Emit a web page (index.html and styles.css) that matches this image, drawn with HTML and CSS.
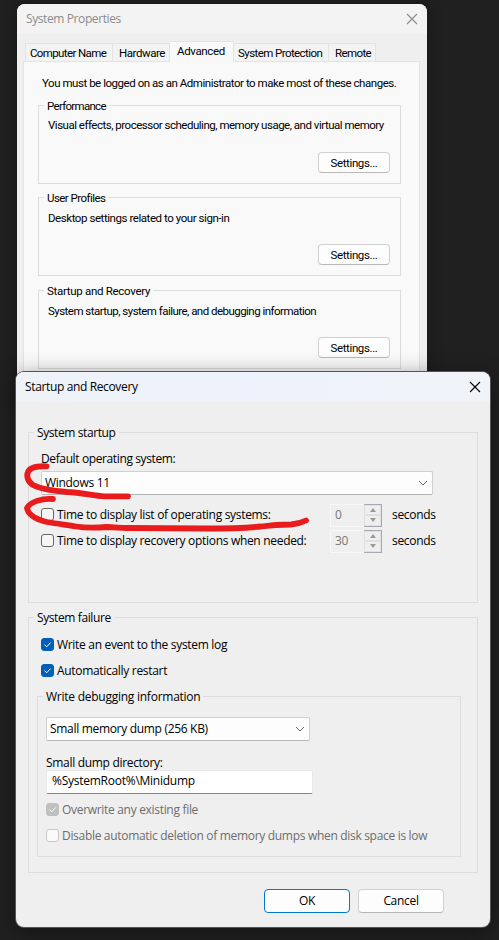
FILE: index.html
```html
<!DOCTYPE html>
<html lang="en">
<head>
<meta charset="utf-8">
<title>System Properties</title>
<link rel="stylesheet" href="styles.css">
</head>
<body>
<main class="desktop">
  <section class="window properties">
    <header class="titlebar"><span>System Properties</span>
      <svg class="close" viewBox="0 0 12 12"><path d="M1 1l10 10M11 1L1 11"/></svg>
    </header>
    <nav class="tabs">
      <div class="tab tab-name"><span>Computer Name</span></div>
      <div class="tab tab-hardware"><span>Hardware</span></div>
      <div class="tab tab-advanced active"><span>Advanced</span></div>
      <div class="tab tab-protection"><span>System Protection</span></div>
      <div class="tab tab-remote"><span>Remote</span></div>
    </nav>
    <div class="page">
      <p class="intro"><span>You must be logged on as an Administrator to make most of these changes.</span></p>
      <div class="group performance">
        <h2 class="legend"><span>Performance</span></h2>
        <p class="desc"><span>Visual effects, processor scheduling, memory usage, and virtual memory</span></p>
        <button class="button settings"><span>Settings...</span></button>
      </div>
      <div class="group profiles">
        <h2 class="legend"><span>User Profiles</span></h2>
        <p class="desc low"><span>Desktop settings related to your sign-in</span></p>
        <button class="button settings"><span>Settings...</span></button>
      </div>
      <div class="group boot">
        <h2 class="legend"><span>Startup and Recovery</span></h2>
        <p class="desc low"><span>System startup, system failure, and debugging information</span></p>
        <button class="button settings"><span>Settings...</span></button>
      </div>
    </div>
  </section>

  <section class="window recovery">
    <header class="titlebar"><span>Startup and Recovery</span>
      <svg class="close" viewBox="0 0 12 12"><path d="M1 1l10 10M11 1L1 11"/></svg>
    </header>
    <div class="content">
      <div class="group startup">
        <h2 class="legend"><span>System startup</span></h2>
        <p class="label"><span>Default operating system:</span></p>
        <div class="combo os"><span>Windows 11</span><svg class="chevron" viewBox="0 0 10 6"><path d="M1 1l4 4 4-4"/></svg></div>
        <div class="row timed">
          <i class="check"></i><span class="caption">Time to display list of operating systems:</span>
          <div class="spinner"><span class="value">0</span><div class="arrows"><i class="up"></i><i class="down"></i></div></div>
          <span>seconds</span>
        </div>
        <div class="row timed">
          <i class="check"></i><span class="caption">Time to display recovery options when needed:</span>
          <div class="spinner"><span class="value">30</span><div class="arrows"><i class="up"></i><i class="down"></i></div></div>
          <span>seconds</span>
        </div>
      </div>
      <div class="group failure">
        <h2 class="legend"><span>System failure</span></h2>
        <div class="row"><i class="check on"><svg viewBox="0 0 13 13"><path d="M3.5 6.6l2.2 2.2 4-4.3"/></svg></i><span>Write an event to the system log</span></div>
        <div class="row"><i class="check on"><svg viewBox="0 0 13 13"><path d="M3.5 6.6l2.2 2.2 4-4.3"/></svg></i><span>Automatically restart</span></div>
        <div class="group debugging">
          <h2 class="legend"><span>Write debugging information</span></h2>
          <div class="combo dump"><span>Small memory dump (256 KB)</span><svg class="chevron" viewBox="0 0 10 6"><path d="M1 1l4 4 4-4"/></svg></div>
          <p class="label"><span>Small dump directory:</span></p>
          <div class="input"><span>%SystemRoot%\Minidump</span></div>
          <div class="row disabled"><i class="check on"><svg viewBox="0 0 13 13"><path d="M3.5 6.6l2.2 2.2 4-4.3"/></svg></i><span>Overwrite any existing file</span></div>
          <div class="row disabled"><i class="check"></i><span>Disable automatic deletion of memory dumps when disk space is low</span></div>
        </div>
      </div>
      <footer class="actions">
        <button class="button default"><span>OK</span></button>
        <button class="button"><span>Cancel</span></button>
      </footer>
    </div>
    <svg class="ink" viewBox="0 0 300 76">
      <path d="M21.5 10.3C14 10 5 11 3 16C1 20 3 26 8 29C18 34 30 35 42 36C58 36.5 68 40 80 40.3L103 40.3"/>
      <path d="M28 43C17 42 5 46 2 52C3 58 10 63 22 66C34 68 42 69 51 70.5C60 72 70 72 82 71C90 71 95 72 102 72L180 72.5C205 72.5 222 72 236 70.5C247 69 253 68.5 266 68.5C272 68 277 66.5 281 64.5"/>
    </svg>
  </section>
</main>
</body>
</html>
```
FILE: styles.css
```css
* { box-sizing: border-box; }
body { margin: 0; font: 12px/16px "Open Sans", sans-serif; color: #000; letter-spacing: -.31px; }
p, h2 { margin: 0; font: inherit; }
span { white-space: nowrap; }
svg { fill: none; display: block; }
.desktop { position: relative; width: 499px; height: 940px; overflow: hidden; background: #202020; }
.window { position: absolute; border-radius: 8px; }
.titlebar { display: flex; justify-content: space-between; height: 30px; align-items: center; }
.close { width: 12px; height: 12px; stroke: currentColor; stroke-width: 1.1; }
.group { border: 1px solid #dcdcdc; }
.legend { width: max-content; height: 16px; margin-top: -8px; padding: 0 3px; }
.button { display: flex; align-items: center; justify-content: center; padding: 0; font: inherit; letter-spacing: inherit; color: #000; background: #fdfdfd; border: 1px solid #d0d0d0; border-bottom-color: #b8b8b8; border-radius: 4px; }

.properties { left: 17px; top: 4px; width: 410px; height: 400px; background: #efefef; overflow: hidden; font-family: Roboto, sans-serif; font-size: 11.5px; letter-spacing: -.46px; box-shadow: 0 0 14px rgba(0,0,0,.35); }
.properties .titlebar { background: #f3f3f3; color: #8c8c8c; padding: 0 9px; font-family: "Open Sans", sans-serif; font-size: 12px; letter-spacing: -.4px; }
.tabs { display: flex; align-items: flex-end; height: 28px; padding-left: 8px; margin-bottom: -1px; position: relative; }
.tab { height: 19px; border: 1px solid #e3e3e3; border-left-width: 0; background: #f3f3f3; line-height: 18px; padding-left: 5px; letter-spacing: -.45px; }
.tab-name { width: 88px; border-left-width: 1px; padding-left: 4px; letter-spacing: -.62px; }
.tab-hardware { width: 57px; padding-left: 6px; }
.tab-advanced { width: 64px; }
.tab-protection { width: 95px; padding-left: 4px; letter-spacing: -.57px; }
.tab-remote { width: 47px; padding-left: 6px; letter-spacing: -.6px; }
.tab.active { height: 21px; background: #f9f9f9; border-bottom: 0; padding-left: 7px; letter-spacing: -.35px; }
.page { margin-left: 6px; width: 397px; height: 400px; border: 1px solid #e3e3e3; background: #f9f9f9; padding: 13px 0 0 14px; }
.intro { padding-left: 4px; margin-bottom: 14px; }
.page .group { width: 363px; height: 79px; margin-bottom: 14px; padding: 0 10px 0 5px; display: flex; flex-direction: column; }
.page .group.performance { margin-bottom: 13px; }
.page .legend { background: #f9f9f9; letter-spacing: -.3px; }
.performance .legend { letter-spacing: -.7px; }
.page .performance .legend { letter-spacing: -.7px; }
.page .profiles .legend { letter-spacing: -.55px; }
.desc { padding: 3px 0 0 4px; letter-spacing: -.49px; }
.desc.low { padding-top: 4px; }
.profiles .desc { letter-spacing: -.44px; }
.boot .desc { letter-spacing: -.53px; }
.settings { width: 72px; height: 21px; margin: auto 0 10px auto; letter-spacing: -.38px; }

.recovery { left: 16px; top: 372px; width: 474px; height: 555px; background: #efefef; box-shadow: 0 0 0 1px #555, 0 4px 22px rgba(0,0,0,.45); }
.recovery .titlebar { background: linear-gradient(90deg, #eef3f8, #eef2fc 50%, #f0f3f8); border-radius: 8px 8px 0 0; padding: 0 9px; letter-spacing: -.36px; }
.content { padding: 30px 12px 0; }
.content .legend { background: #efefef; margin-left: -1px; letter-spacing: -.4px; }
.content .debugging .legend { margin-left: 0; letter-spacing: -.25px; }
.startup { height: 171px; margin-bottom: 14px; padding-left: 6px; }
.startup .label { margin: 10px 0 4px 6px; letter-spacing: -.38px; }
.combo { height: 24px; display: flex; align-items: center; justify-content: space-between; padding: 0 4px 0 3px; background: #fdfdfd; border: 1px solid #d0d0d0; border-bottom-color: #b4b4b4; border-radius: 2px; }
.chevron { width: 10px; height: 6px; stroke: #666; }
.os { width: 392px; margin: 0 0 7px 6px; }
.row { display: flex; align-items: center; height: 26px; padding-left: 6px; }
.check { width: 13px; height: 13px; border: 1px solid #666; border-radius: 3px; background: #f6f6f6; margin-right: 3px; flex: none; position: relative; top: -.5px; }
.check svg { width: 13px; height: 13px; margin: -1px; stroke: #fff; }
.check.on { background: #005fb8; border-color: #005fb8; }
.timed .caption { width: 273px; }
.spinner { display: flex; width: 52px; height: 23px; border: 1px solid #f8f8f8; margin-right: 10px; color: #777; }
.value { width: 34px; padding: 2px 0 0 4px; }
.arrows { flex: 1; border: 1px solid #a8a8b0; border-left: 0; margin: -1px; display: flex; flex-direction: column; }
.arrows i { flex: 1; border: 1px solid #e0e0e0; display: flex; justify-content: center; align-items: center; }
.arrows i::before { content: ""; border: 3px solid transparent; }
.arrows .up::before { border-bottom: 4px solid #999; border-top: 0; }
.arrows .down::before { border-top: 4px solid #999; border-bottom: 0; }
.failure { height: 256px; padding-left: 6px; }
.failure > .legend { margin-bottom: 6px; }
.debugging { margin: 12px 0 0 2px; width: 424px; height: 161px; padding-left: 5px; }
.dump { width: 264px; margin: 12px 0 14px 3px; }
.debugging .label { padding-left: 3px; }
.input { width: 267px; height: 24px; margin: -1px 0 3px 3px; background: #fff; border: 1px solid #e8e8e8; border-bottom-color: #868686; border-radius: 2px; padding: 2px 5px; letter-spacing: -.25px; }
.debugging .row { padding-left: 3px; }
.disabled { color: #6d6d6d; }
.disabled .check { border-color: #c8c8c8; background: #f9f9f9; }
.disabled .check.on { background: #c0c0c0; border-color: #c0c0c0; }
.actions { display: flex; justify-content: flex-end; gap: 8px; margin-top: 16px; padding-right: 34px; }
.actions .button { width: 86px; height: 24px; }
.button.default { border-color: #0078d4; }
.ink { position: absolute; left: 9px; top: 84px; width: 300px; height: 76px; stroke: #e81c1c; stroke-width: 5.8; stroke-linecap: round; stroke-linejoin: round; overflow: visible; }
```
